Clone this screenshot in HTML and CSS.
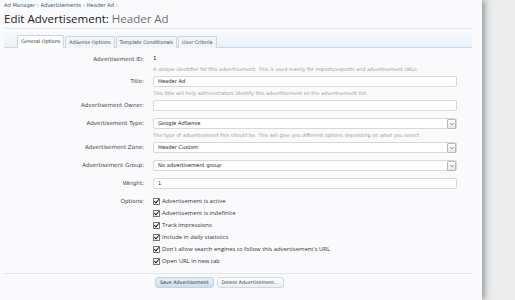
FILE: index.html
```html
<!DOCTYPE html>
<html lang="en">
<head>
<meta charset="UTF-8">
<title>Edit Advertisement: Header Ad</title>
<link rel="stylesheet" href="styles.css">
</head>
<body>

<div class="page">

  <div class="crumbs">
    <a href="#">Ad Manager</a> &rsaquo;
    <a href="#">Advertisements</a> &rsaquo;
    <a href="#">Header Ad</a> &rsaquo;
  </div>

  <h1>Edit Advertisement: <span class="muted">Header Ad</span></h1>

  <div class="tabbar">
    <span class="tab active">General Options</span>
    <span class="tab">AdSense Options</span>
    <span class="tab">Template Conditionals</span>
    <span class="tab">User Criteria</span>
  </div>

  <div class="form">

    <div class="row has-hint">
      <div class="label">Advertisement ID:</div>
      <div class="field">
        <div class="value">1</div>
        <div class="hint">A unique identifier for this advertisement. This is used mainly for imports/exports and advertisement URLs.</div>
      </div>
    </div>

    <div class="row has-hint">
      <div class="label">Title:</div>
      <div class="field">
        <div class="input">Header Ad</div>
        <div class="hint">This title will help administrators identify this advertisement on the advertisement list.</div>
      </div>
    </div>

    <div class="row">
      <div class="label">Advertisement Owner:</div>
      <div class="field">
        <div class="input"></div>
      </div>
    </div>

    <div class="row has-hint">
      <div class="label">Advertisement Type:</div>
      <div class="field">
        <div class="input select">Google AdSense<span class="arrow"><svg viewBox="0 0 6 6" width="6" height="6"><path d="M1.5 2.3 L3 3.8 L4.5 2.3" fill="none" stroke="#555" stroke-width="0.8"/></svg></span></div>
        <div class="hint">The type of advertisement this should be. This will give you different options depending on what you select.</div>
      </div>
    </div>

    <div class="row">
      <div class="label">Advertisement Zone:</div>
      <div class="field">
        <div class="input select">Header Custom<span class="arrow"><svg viewBox="0 0 6 6" width="6" height="6"><path d="M1.5 2.3 L3 3.8 L4.5 2.3" fill="none" stroke="#555" stroke-width="0.8"/></svg></span></div>
      </div>
    </div>

    <div class="row">
      <div class="label">Advertisement Group:</div>
      <div class="field">
        <div class="input select">No advertisement group<span class="arrow"><svg viewBox="0 0 6 6" width="6" height="6"><path d="M1.5 2.3 L3 3.8 L4.5 2.3" fill="none" stroke="#555" stroke-width="0.8"/></svg></span></div>
      </div>
    </div>

    <div class="row">
      <div class="label">Weight:</div>
      <div class="field">
        <div class="input">1</div>
      </div>
    </div>

    <div class="row options">
      <div class="label">Options:</div>
      <div class="field">
        <div class="check"><span class="box"></span>Advertisement is active</div>
        <div class="check"><span class="box"></span>Advertisement is indefinite</div>
        <div class="check"><span class="box"></span>Track impressions</div>
        <div class="check"><span class="box"></span>Include in daily statistics</div>
        <div class="check"><span class="box"></span>Don't allow search engines to follow this advertisement's URL</div>
        <div class="check"><span class="box"></span>Open URL in new tab</div>
      </div>
    </div>

  </div>

  <div class="submit">
    <button class="btn primary">Save Advertisement</button>
    <button class="btn">Delete Advertisement...</button>
  </div>

</div>

</body>
</html>
```

FILE: styles.css
```css
body {
  margin: 0;
  background-color: #ececec;
  font-family: "DejaVu Sans", Verdana, sans-serif;
  overflow: hidden;
}
.page {
  width: 482px;
  height: 300px;
  background-color: #fafafc;
  box-shadow: 3px 0 6px rgba(60, 80, 90, 0.5);
  overflow: hidden;
}
.crumbs {
  padding: 1px 4px 0;
  height: 8px;
  font-size: 5.2px;
  line-height: 8px;
  color: #4a6a8c;
}
.crumbs a {
  color: #2f5784;
  text-decoration: none;
}
h1 {
  margin: 2px 0 0 4px;
  height: 16px;
  font-family: "Open Sans", "DejaVu Sans", sans-serif;
  font-weight: normal;
  font-size: 11.5px;
  line-height: 16px;
  color: #222;
}
h1 .muted {
  color: #6f6f6f;
}
.tabbar {
  margin: 1px 10px 0 4px;
  height: 18px;
  padding-left: 13px;
  display: flex;
  align-items: flex-end;
  border-top: 1px solid #e6eaee;
  border-bottom: 1px solid #c9d8e4;
  background: linear-gradient(#fbfcfd, #e9f1f8);
}
.tab {
  height: 11px;
  margin-right: 1px;
  margin-bottom: -1px;
  padding: 0 3px;
  font-size: 4.85px;
  line-height: 11px;
  color: #2d4a66;
  background-color: #f1f5f9;
  border: 1px solid #c9d8e4;
  border-bottom: none;
  border-radius: 2px 2px 0 0;
}
.tab.active {
  background-color: #fff;
  color: #333;
  height: 12px;
}
.form {
  padding-top: 6px;
}
.row {
  display: grid;
  grid-template-columns: 144px 304px;
  column-gap: 9px;
  margin-bottom: 7px;
}
.row.has-hint {
  margin-bottom: 3px;
}
.label {
  text-align: right;
  font-size: 5.6px;
  line-height: 11px;
  color: #444;
}
.value {
  font-size: 5.6px;
  line-height: 9px;
  color: #222;
}
.hint {
  margin-top: 2px;
  font-size: 4.95px;
  line-height: 8px;
  color: #9a9a9a;
}
.input {
  position: relative;
  height: 9px;
  padding: 0 4px;
  border: 1px solid #d9d9d9;
  border-radius: 2px;
  background-color: #fff;
  font-size: 5.2px;
  line-height: 9px;
  color: #222;
}
.arrow {
  position: absolute;
  right: 0;
  top: 0;
  width: 7px;
  height: 8px;
  display: flex;
  align-items: center;
  justify-content: center;
  border: 1px solid #b8b8b8;
  border-radius: 1px;
  background: linear-gradient(#fff, #e9e9e9);
}
.options {
  margin-top: -1px;
  margin-bottom: 0;
}
.options .label {
  line-height: 12px;
}
.check {
  display: flex;
  align-items: center;
  height: 12px;
  font-family: "Open Sans", "DejaVu Sans", sans-serif;
  font-size: 5.9px;
  color: #333;
}
.box {
  position: relative;
  width: 5px;
  height: 5px;
  margin-right: 2px;
  border: 1px solid #777;
  background-color: #fff;
}
.box::after {
  content: "";
  position: absolute;
  left: 1px;
  top: -1px;
  width: 2px;
  height: 4px;
  border: solid #222;
  border-width: 0 1px 1px 0;
  transform: rotate(40deg);
}
.submit {
  margin: 6px 10px 0 4px;
  padding: 3px 0 0 151px;
  border-top: 1px solid #e3e6ea;
  display: flex;
  gap: 3px;
}
.btn {
  height: 11px;
  padding: 0 4px;
  font-family: "DejaVu Sans", Verdana, sans-serif;
  font-size: 4.8px;
  line-height: 9px;
  color: #2b3d52;
  background: linear-gradient(#fdfdfd, #eceff2);
  border: 1px solid #d3d8de;
  border-radius: 3px;
}
.btn.primary {
  background: linear-gradient(#e6eef6, #cfdeec);
  border-color: #c2d3e3;
  color: #1c3552;
}
```
